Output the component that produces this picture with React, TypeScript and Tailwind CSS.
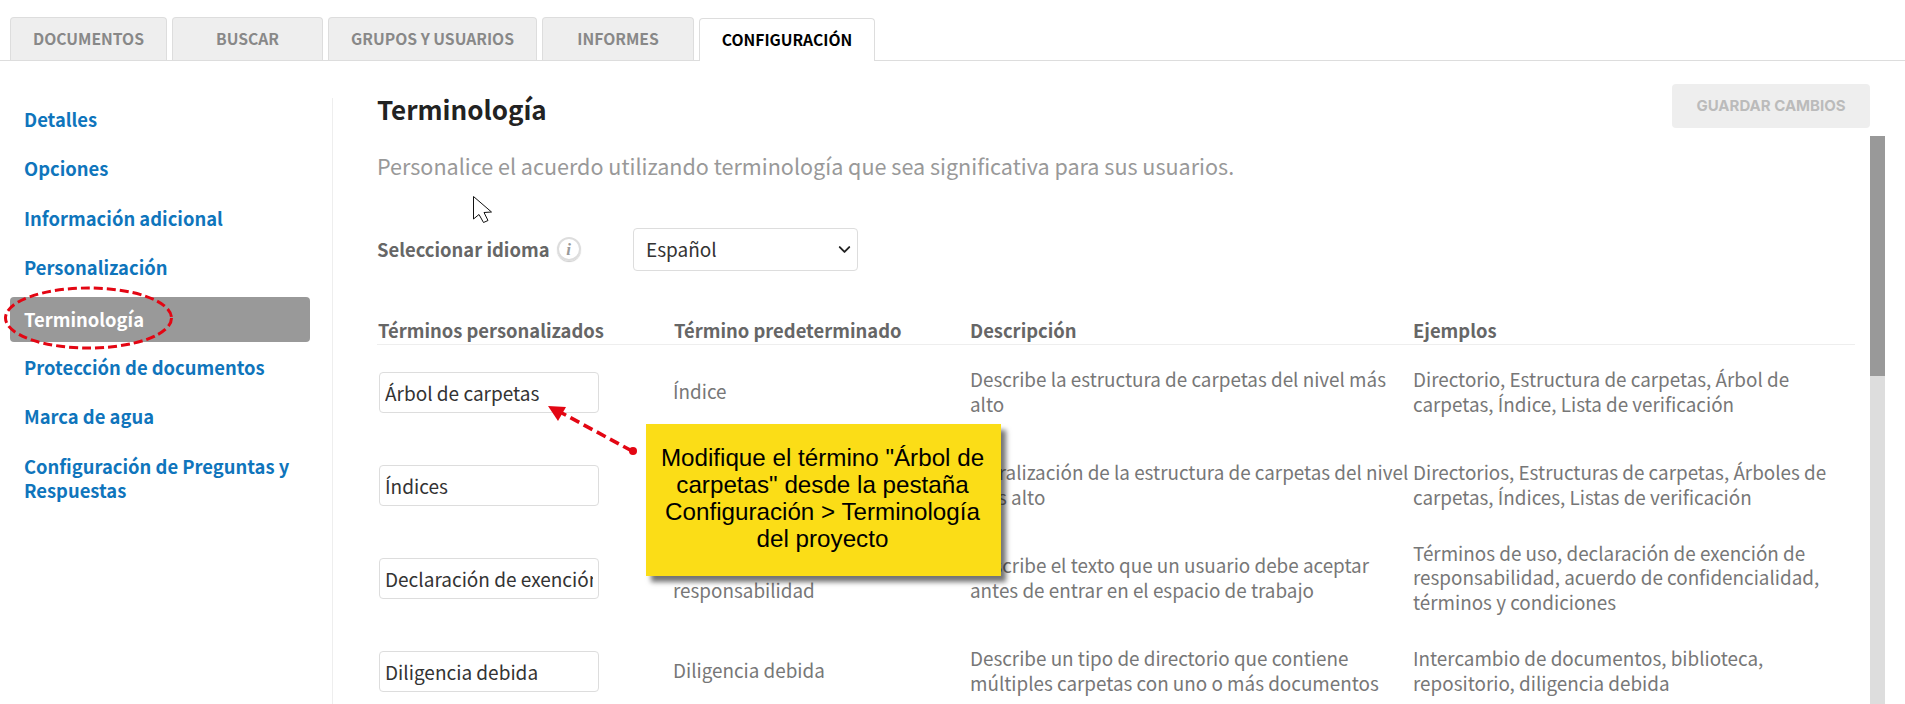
import { ChevronDown } from "lucide-react";

const TABS = [
  { label: "DOCUMENTOS", width: "w-[157px]" },
  { label: "BUSCAR", width: "w-[151px]" },
  { label: "GRUPOS Y USUARIOS", width: "w-[209px]" },
  { label: "INFORMES", width: "w-[152px]" },
];

const NAV = [
  "Detalles",
  "Opciones",
  "Información adicional",
  "Personalización",
  "Terminología",
  "Protección de documentos",
  "Marca de agua",
  "Configuración de Preguntas y Respuestas",
];

const ROWS = [
  {
    term: "Árbol de carpetas",
    base: "Índice",
    desc: "Describe la estructura de carpetas del nivel más alto",
    examples: "Directorio, Estructura de carpetas, Árbol de carpetas, Índice, Lista de verificación",
  },
  {
    term: "Índices",
    base: "Índices",
    desc: "Pluralización de la estructura de carpetas del nivel más alto",
    examples: "Directorios, Estructuras de carpetas, Árboles de carpetas, Índices, Listas de verificación",
  },
  {
    term: "Declaración de exención de responsabilidad",
    base: "Declaración de exención de responsabilidad",
    desc: "Describe el texto que un usuario debe aceptar antes de entrar en el espacio de trabajo",
    examples: "Términos de uso, declaración de exención de responsabilidad, acuerdo de confidencialidad, términos y condiciones",
  },
  {
    term: "Diligencia debida",
    base: "Diligencia debida",
    desc: "Describe un tipo de directorio que contiene múltiples carpetas con uno o más documentos",
    examples: "Intercambio de documentos, biblioteca, repositorio, diligencia debida",
  },
];

function Tabs() {
  return (
    <div className="flex h-[44px] gap-[5px] border-b border-[#ddd] pl-[10px]">
      {TABS.map((t) => (
        <div
          key={t.label}
          className={`flex h-[43px] ${t.width} items-center justify-center rounded-t-[4px] border border-b-0 border-[#ddd] bg-[#eee] text-[15.7px] font-semibold text-[#888]`}
        >
          {t.label}
        </div>
      ))}
      <div className="z-10 mt-px flex h-[43px] w-[176px] items-center justify-center rounded-t-[4px] border border-b-0 border-[#ddd] bg-white text-[15.7px] font-semibold text-black">
        CONFIGURACIÓN
      </div>
    </div>
  );
}

function Sidebar() {
  return (
    <nav className="mt-[37px] h-[700px] w-[333px] shrink-0 border-r border-[#eee] pl-[10px] pr-[22px]">
      <div className="-mt-[4px] flex flex-col">
        {NAV.map((item) =>
          item === "Terminología" ? (
            <div
              key={item}
              className="mt-[5px] flex h-[45px] shrink-0 items-center rounded-[4px] bg-[#999] pl-[14px] text-[18.4px] font-semibold text-white"
            >
              {item}
            </div>
          ) : (
            <a
              key={item}
              className="shrink-0 py-[12.5px] pl-[14px] text-[18.4px] font-semibold leading-[24.5px] text-[#0f75bc]"
            >
              {item}
            </a>
          ),
        )}
      </div>
    </nav>
  );
}

function TermRow({ term, base, desc, examples }: (typeof ROWS)[number]) {
  return (
    <div className="grid h-[93px] grid-cols-[296px_297px_443px_1fr] items-center text-[18.85px] leading-[24.4px] text-[#777]">
      <input
        readOnly
        value={term}
        className="ml-[2px] mt-[2px] h-[41px] w-[220px] rounded-[4px] border border-[#ddd] px-[5px] text-[19px] text-[#333]"
      />
      <div className="pr-[40px]">{base}</div>
      <div>{desc}</div>
      <div>{examples}</div>
    </div>
  );
}

function InfoIcon() {
  return (
    <span className="flex h-[24px] w-[24px] items-center justify-center rounded-full border-2 border-[#ddd] font-['Liberation_Serif',serif] text-[17px] font-bold italic leading-none text-[#999] shadow-[0_1px_1px_#ccc]">
      i
    </span>
  );
}

function LanguageSelect() {
  return (
    <div className="relative h-[43px] w-[225px]">
      <select className="h-full w-full appearance-none rounded-[4px] border border-[#ddd] bg-white pl-[12px] text-[19px] text-[#333]">
        <option>Español</option>
      </select>
      <ChevronDown className="pointer-events-none absolute right-[4px] top-[12px] h-[19px] w-[19px] text-[#222]" strokeWidth={2.4} />
    </div>
  );
}

function Main() {
  return (
    <main className="flex min-w-0 flex-1 flex-col pl-[44px] pr-[20px]">
      <div className="flex h-[75px] items-start justify-between pt-[23px]">
        <h1 className="mt-[5px] text-[26px] font-semibold leading-[40px] text-[#222]">Terminología</h1>
        <button className="mr-[15px] h-[44px] w-[198px] rounded-[4px] bg-[#eee] font-['Inter',sans-serif] text-[15px] font-bold text-[#bbb]">
          GUARDAR CAMBIOS
        </button>
      </div>
      <div className="flex min-h-0 flex-1">
        <div className="flex-1 overflow-hidden pr-[15px]">
          <p className="mt-[16px] text-[21.55px] leading-[28px] text-[#999]">
            Personalice el acuerdo utilizando terminología que sea significativa para sus usuarios.
          </p>
          <div className="mt-[48px] flex h-[43px] items-center">
            <div className="flex w-[256px] items-center gap-[7px]">
              <span className="text-[18.4px] font-semibold text-[#666]">Seleccionar idioma</span>
              <InfoIcon />
            </div>
            <LanguageSelect />
          </div>
          <div className="mt-[45px] grid h-[29px] grid-cols-[296px_296px_443px_1fr] border-b border-[#eee] pl-px pt-px text-[18.4px] font-semibold leading-[27px] text-[#666]">
            <span>Términos personalizados</span>
            <span>Término predeterminado</span>
            <span>Descripción</span>
            <span>Ejemplos</span>
          </div>
          {ROWS.map((r) => (
            <TermRow key={r.term} {...r} />
          ))}
        </div>
        <div className="w-[15px] shrink-0 bg-[#ddd]">
          <div className="h-[240px] bg-[#999]" />
        </div>
      </div>
    </main>
  );
}

function Callout() {
  return (
    <div className="absolute left-[646px] top-[424px] flex h-[152px] w-[355px] items-center justify-center bg-[#fbdd17] px-[12px] pb-[2px] pr-[14px] text-center font-['Liberation_Sans',sans-serif] text-[24.2px] leading-[26.8px] text-black shadow-[5px_6px_5px_rgba(0,0,0,0.55)]">
      Modifique el término "Árbol de carpetas" desde la pestaña Configuración &gt; Terminología del proyecto
    </div>
  );
}

function Annotations() {
  return (
    <svg className="pointer-events-none absolute left-0 top-0" width="700" height="480" fill="none">
      <ellipse cx="88.5" cy="318" rx="83" ry="30" stroke="#e30613" strokeWidth="3" strokeDasharray="9 4" />
      <path d="M632 451 L560 412" stroke="#e30613" strokeWidth="3.6" strokeDasharray="10 5" />
      <circle cx="633" cy="451" r="4" fill="#e30613" />
      <path d="M548 406 L566 407 L558 421 Z" fill="#e30613" />
      <path
        d="M473.5 196.5 V219 L479 214.5 L483.5 222.5 L488 220.5 L484 212.5 L491.5 212 Z"
        fill="#fff"
        stroke="#111"
        strokeWidth="1"
      />
    </svg>
  );
}

export default function App() {
  return (
    <div className="relative h-[704px] w-[1905px] overflow-hidden bg-white pt-[17px] font-['Noto_Sans_CJK_SC','Noto_Sans',sans-serif]">
      <Tabs />
      <div className="flex h-[643px]">
        <Sidebar />
        <Main />
      </div>
      <Callout />
      <Annotations />
    </div>
  );
}
